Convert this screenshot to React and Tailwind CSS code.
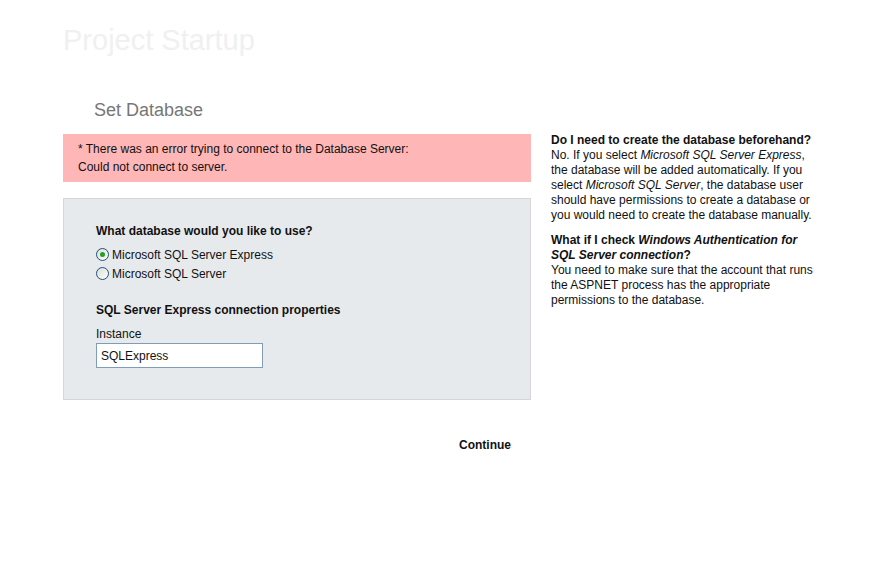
import React, { useState } from "react";

const Radio = ({ checked, label, onClick }) => (
  <label onClick={onClick} className="flex items-center h-[19px] cursor-pointer">
    <span className="w-[13px] h-[13px] rounded-full border border-[#1c5180] bg-gradient-to-br from-[#dcdcd7] to-white flex items-center justify-center">
      {checked && <span className="w-[5px] h-[5px] rounded-full bg-[#21a121]" />}
    </span>
    <span className="ml-[3px]">{label}</span>
  </label>
);

const App = () => {
  const [db, setDb] = useState("express");
  const [instance, setInstance] = useState("SQLExpress");

  return (
    <div className="min-h-screen bg-white font-['Liberation_Sans',Arial,sans-serif] text-[12px] text-[#111] pl-[63px]">
      <h1 className="pt-[22px] text-[29px] leading-[36px] text-[#f0f0f0]">Project Startup</h1>
      <h2 className="mt-[42px] ml-[31px] text-[18px] leading-[20px] text-[#777]">Set Database</h2>

      <div className="flex mt-[14px]">
        <div className="w-[468px]">
          <div className="bg-[#ffb6b6] pl-[15px] pt-[6px] pb-[6px] leading-[18px]">
            <p>* There was an error trying to connect to the Database Server:</p>
            <p>Could not connect to server.</p>
          </div>

          <div className="mt-[16px] h-[202px] bg-[#e7eaed] border border-[#d6d6d6] pl-[32px] pt-[25px]">
            <p className="font-bold leading-[15px]">What database would you like to use?</p>
            <div className="mt-[6px]">
              <Radio checked={db === "express"} label="Microsoft SQL Server Express" onClick={() => setDb("express")} />
              <Radio checked={db === "server"} label="Microsoft SQL Server" onClick={() => setDb("server")} />
            </div>
            <p className="mt-[20px] font-bold leading-[15px]">SQL Server Express connection properties</p>
            <p className="mt-[9px] leading-[15px]">Instance</p>
            <input
              value={instance}
              onChange={(e) => setInstance(e.target.value)}
              className="mt-[1px] w-[167px] h-[25px] border border-[#7f9db9] bg-white px-[4px] text-[12px] outline-none"
            />
          </div>

          <div className="flex justify-end pr-[20px] mt-[38px]">
            <button className="font-bold leading-[15px] text-[#111]">Continue</button>
          </div>
        </div>

        <div className="ml-[20px] w-[270px] leading-[15px] -mt-[1px]">
          <p className="font-bold">Do I need to create the database beforehand?</p>
          <p>
            No. If you select <i>Microsoft SQL Server Express</i>, the database will be added automatically. If you
            select <i>Microsoft SQL Server</i>, the database user should have permissions to create a database or you
            would need to create the database manually.
          </p>
          <p className="font-bold mt-[10px]">
            What if I check <i>Windows Authentication for SQL Server connection</i>?
          </p>
          <p>
            You need to make sure that the account that runs the ASPNET process has the appropriate permissions to the
            database.
          </p>
        </div>
      </div>
    </div>
  );
};

export default App;
